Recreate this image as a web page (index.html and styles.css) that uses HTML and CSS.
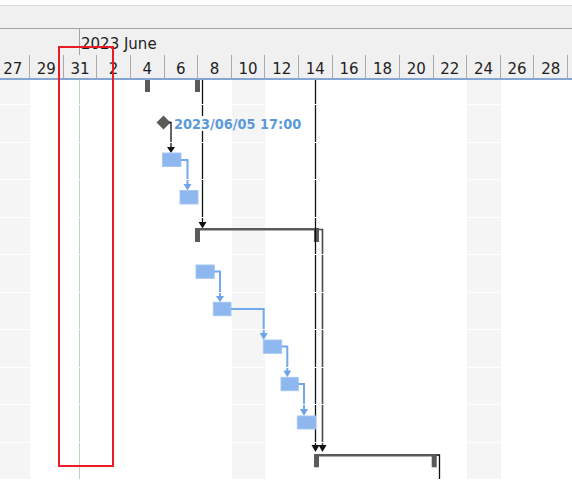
FILE: index.html
```html
<!DOCTYPE html>
<html lang="en">
<head>
    <meta charset="UTF-8">
    <meta name="viewport" content="width=device-width, initial-scale=1.0">
    <title>Gantt Chart</title>
    <link rel="stylesheet" href="styles.css">
</head>
<body>
    <div class="gantt">
        <div class="toolbar"></div>

        <div class="scale">
            <div class="months">
                <div class="month may"></div>
                <div class="month june">2023 June</div>
            </div>
            <div class="days">
                <div class="day">27</div>
                <div class="day">29</div>
                <div class="day">31</div>
                <div class="day">2</div>
                <div class="day">4</div>
                <div class="day">6</div>
                <div class="day">8</div>
                <div class="day">10</div>
                <div class="day">12</div>
                <div class="day">14</div>
                <div class="day">16</div>
                <div class="day">18</div>
                <div class="day">20</div>
                <div class="day">22</div>
                <div class="day">24</div>
                <div class="day">26</div>
                <div class="day">28</div>
                <div class="day"></div>
            </div>
        </div>

        <div class="chart">
            <!-- weekend shading -->
            <div class="cols">
                <div class="col weekend"></div>
                <div class="col"></div>
                <div class="col"></div>
                <div class="col"></div>
                <div class="col"></div>
                <div class="col"></div>
                <div class="col"></div>
                <div class="col weekend"></div>
                <div class="col"></div>
                <div class="col"></div>
                <div class="col"></div>
                <div class="col"></div>
                <div class="col"></div>
                <div class="col"></div>
                <div class="col weekend"></div>
                <div class="col"></div>
                <div class="col"></div>
                <div class="col"></div>
            </div>

            <!-- bars, milestones and links -->
            <svg class="bars" width="572" height="400" viewBox="0 80 572 400">
                <line class="today" x1="79.5" y1="80" x2="79.5" y2="480"/>

                <!-- summary 1 -->
                <rect class="summary" x="145" y="80" width="5" height="12"/>
                <rect class="summary" x="195" y="80" width="5" height="12"/>
                <line class="link-dark" x1="202.5" y1="80" x2="202.5" y2="116"/>
                <line class="link-dark" x1="202.5" y1="131" x2="202.5" y2="223"/>
                <polygon class="head-dark" points="198.5,222 206.5,222 202.5,228.5"/>

                <!-- milestone -->
                <polygon class="summary" points="163.5,115.5 170.5,122.5 163.5,129.5 156.5,122.5"/>
                <text class="ms-label" x="174" y="129.3">2023/06/05 17:00</text>
                <polyline class="link-dark" points="169,122.5 171,122.5 171,148"/>
                <polygon class="head-dark" points="167,147 175,147 171,153"/>

                <!-- tasks 1-2 -->
                <rect class="task" x="162.5" y="153" width="18.5" height="13.5"/>
                <polyline class="link" points="181,160 187.5,160 187.5,185"/>
                <polygon class="head" points="183.5,184 191.5,184 187.5,190.5"/>
                <rect class="task" x="180" y="190.5" width="18" height="13.5"/>

                <!-- summary 2 -->
                <rect class="summary" x="195" y="228" width="123" height="2.5"/>
                <rect class="summary" x="195" y="228" width="5" height="14"/>
                <rect class="summary" x="314" y="228" width="5" height="14"/>
                <line class="link-dark" x1="315.5" y1="80" x2="315.5" y2="446"/>
                <polygon class="head-dark" points="311.5,445 319.5,445 315.5,452"/>
                <polyline class="link-gray" points="318,229.5 322.5,229.5 322.5,446"/>
                <polygon class="head-dark" points="318.5,445 326.5,445 322.5,452"/>

                <!-- tasks 3-7 -->
                <rect class="task" x="196" y="265" width="18.3" height="13.3"/>
                <polyline class="link" points="214.3,271.5 220,271.5 220,297"/>
                <polygon class="head" points="216,296 224,296 220,302.3"/>

                <rect class="task" x="213.3" y="302.3" width="17.7" height="13.4"/>
                <polyline class="link" points="231,309 263.7,309 263.7,334"/>
                <polygon class="head" points="259.7,333 267.7,333 263.7,340"/>

                <rect class="task" x="263.3" y="340" width="18.4" height="13.3"/>
                <polyline class="link" points="281.7,346.5 287.3,346.5 287.3,371.5"/>
                <polygon class="head" points="283.3,370.5 291.3,370.5 287.3,377.3"/>

                <rect class="task" x="281" y="377.3" width="17.3" height="13.4"/>
                <polyline class="link" points="298.3,384 304,384 304,410"/>
                <polygon class="head" points="300,409 308,409 304,416"/>

                <rect class="task" x="297.3" y="416" width="18.4" height="13"/>

                <!-- summary 3 -->
                <rect class="summary" x="315" y="454" width="122" height="2.5"/>
                <rect class="summary" x="314" y="454" width="5" height="13.3"/>
                <rect class="summary" x="431.7" y="454" width="5" height="13.3"/>
                <polyline class="link-dark" points="436.7,455 439.5,455 439.5,480"/>
            </svg>

            <!-- row separators -->
            <div class="rows">
                <div class="row first"></div>
                <div class="row"></div>
                <div class="row"></div>
                <div class="row"></div>
                <div class="row"></div>
                <div class="row"></div>
                <div class="row"></div>
                <div class="row"></div>
                <div class="row"></div>
                <div class="row"></div>
                <div class="row"></div>
            </div>
        </div>

        <div class="highlight"></div>
    </div>
</body>
</html>
```

FILE: styles.css
```css
body {
    margin: 0;
    background-color: #fff;
    font-family: "DejaVu Sans", "Liberation Sans", sans-serif;
    overflow: hidden;
}
.gantt {
    position: relative;
    width: 572px;
    height: 480px;
    overflow: hidden;
}
.toolbar {
    margin-top: 5px;
    height: 22px;
    background-color: #f0f0f0;
    border-top: 1px solid #dcdcdc;
    border-bottom: 1px solid #a3a3a3;
}
.scale {
    background-color: #f0f0f0;
    border-bottom: 2px solid #86a6d2;
    color: #1e1e1e;
    font-size: 15px;
}
.months {
    display: flex;
    height: 26px;
}
.month.may {
    flex: 0 0 79px;
    border-right: 1px solid #a3a3a3;
}
.month.june {
    padding: 7px 0 0 1px;
    line-height: 17px;
}
.days {
    display: flex;
    height: 23px;
    margin-left: -3.625px;
}
.day {
    flex: 0 0 33.625px;
    box-sizing: border-box;
    border-right: 1px solid #a8a8a8;
    padding-top: 6px;
    line-height: 17px;
    text-align: center;
}
.chart {
    display: grid;
    height: 400px;
}
.chart > * {
    grid-area: 1 / 1;
}
.cols {
    display: flex;
    margin-left: -3.625px;
}
.col {
    flex: 0 0 33.625px;
}
.col.weekend {
    background-color: #f5f5f5;
}
.bars {
    display: block;
}
.today {
    stroke: #b8d5b8;
    stroke-width: 1;
}
.summary {
    fill: #5a5a5a;
}
.task {
    fill: #8db7ee;
    stroke: #a6c7f2;
    stroke-width: 1;
}
.link {
    fill: none;
    stroke: #72a8ec;
    stroke-width: 2;
}
.head {
    fill: #6ea5ea;
}
.link-dark {
    fill: none;
    stroke: #111;
    stroke-width: 1.3;
}
.link-gray {
    fill: none;
    stroke: #4a4a4a;
    stroke-width: 1.6;
}
.head-dark {
    fill: #111;
}
.ms-label {
    fill: #5b9ad9;
    font-family: "DejaVu Sans Condensed", "DejaVu Sans", sans-serif;
    font-stretch: condensed;
    font-weight: bold;
    font-size: 14.4px;
}
.rows {
    display: flex;
    flex-direction: column;
}
.row {
    flex: 0 0 37.5px;
    box-sizing: border-box;
    border-bottom: 1px solid #fff;
}
.row.first {
    flex-basis: 25px;
}
.highlight {
    position: absolute;
    left: 58px;
    top: 46px;
    width: 56px;
    height: 421px;
    box-sizing: border-box;
    border: 2px solid #ec1c24;
}
```
